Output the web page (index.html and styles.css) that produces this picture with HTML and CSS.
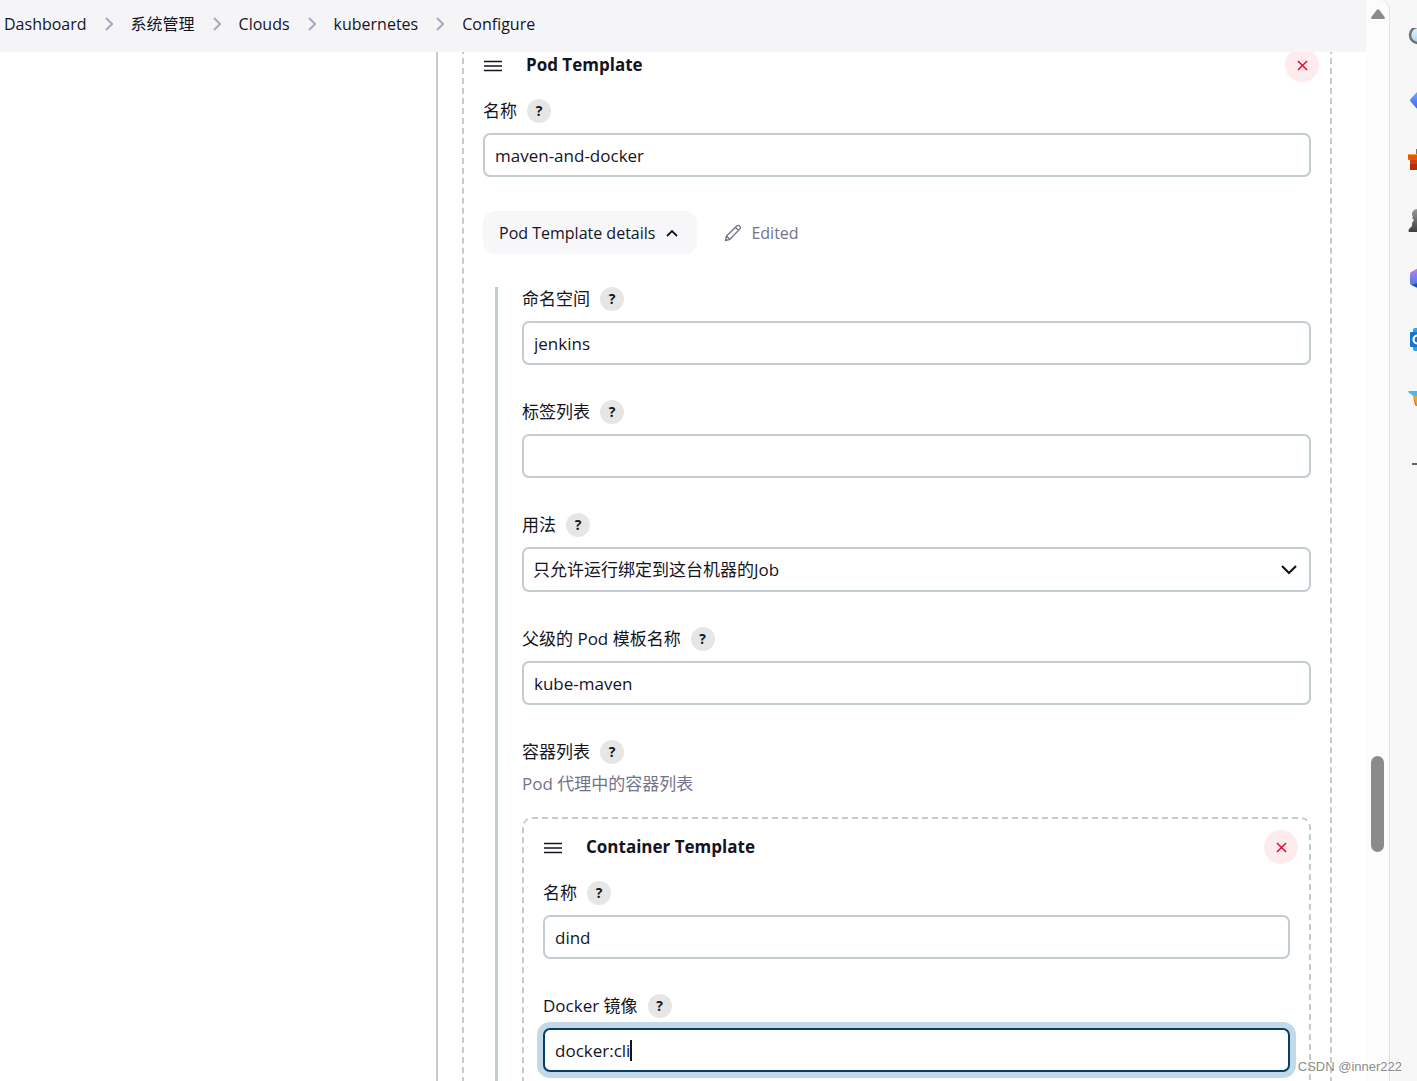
FILE: index.html
```html
<!DOCTYPE html>
<html lang="zh-CN">
<head>
<meta charset="utf-8">
<meta name="viewport" content="width=device-width, initial-scale=1">
<title>Configure - kubernetes</title>
<link rel="stylesheet" href="styles.css">
</head>
<body>
<svg class="sprite" aria-hidden="true">
  <symbol id="chevron" viewBox="0 0 8 14"><path d="M1 1l6 6-6 6" fill="none" stroke="#a9a9bd" stroke-width="2"/></symbol>
  <symbol id="handle" viewBox="0 0 20 14"><path d="M1 3.500h18M1 8h18M1 12.500h18" fill="none" stroke="currentColor" stroke-width="1.700"/></symbol>
  <symbol id="close" viewBox="0 0 12 12"><path d="M1 1l10 10M11 1L1 11" fill="none" stroke="#e6002e" stroke-width="1.500"/></symbol>
</svg>
<div class="window">
  <div class="page">
    <nav class="breadcrumbs" aria-label="Breadcrumb">
      <a href="#">Dashboard</a>
      <svg class="chevron"><use href="#chevron"/></svg>
      <a href="#">系统管理</a>
      <svg class="chevron"><use href="#chevron"/></svg>
      <a href="#">Clouds</a>
      <svg class="chevron"><use href="#chevron"/></svg>
      <a href="#">kubernetes</a>
      <svg class="chevron"><use href="#chevron"/></svg>
      <a href="#">Configure</a>
    </nav>
    <main class="content">
      <form class="form">
        <section class="card card-outer">
          <header class="card-header">
            <svg class="handle"><use href="#handle"/></svg>
            <h2>Pod Template</h2>
            <button type="button" class="delete" aria-label="Delete"><svg><use href="#close"/></svg></button>
          </header>
          <div class="field field-name">
            <div class="field-label"><label for="pod-name">名称</label><button type="button" class="help">?</button></div>
            <input class="control" id="pod-name" type="text" value="maven-and-docker">
          </div>
          <div class="details-bar">
            <button type="button" class="details">Pod Template details
              <svg viewBox="0 0 12 8"><path d="M1 7l5-5 5 5" fill="none" stroke="currentColor" stroke-width="1.800"/></svg>
            </button>
            <span class="edited">
              <svg viewBox="0 0 18 18"><path d="M1.500 16.500l1-4.500L13 1.700q1.400-.9 2.700.4t.3 2.700L6 15.300zM11.500 3.500l3 3M2.700 12.200l3 3" fill="none" stroke="currentColor" stroke-width="1.300" stroke-linejoin="round"/></svg>
              Edited
            </span>
          </div>
          <div class="nested">
            <div class="field">
              <div class="field-label"><label for="namespace">命名空间</label><button type="button" class="help">?</button></div>
              <input class="control" id="namespace" type="text" value="jenkins">
            </div>
            <div class="field">
              <div class="field-label"><label for="labels">标签列表</label><button type="button" class="help">?</button></div>
              <input class="control" id="labels" type="text">
            </div>
            <div class="field">
              <div class="field-label"><label for="usage">用法</label><button type="button" class="help">?</button></div>
              <div class="select-wrap">
                <select class="control" id="usage"><option>只允许运行绑定到这台机器的Job</option></select>
                <svg class="select-arrow" viewBox="0 0 16 10"><path d="M1 1l7 7 7-7" fill="none" stroke="currentColor" stroke-width="2.200"/></svg>
              </div>
            </div>
            <div class="field">
              <div class="field-label"><label for="parent">父级的 Pod 模板名称</label><button type="button" class="help">?</button></div>
              <input class="control" id="parent" type="text" value="kube-maven">
            </div>
            <div class="container-list">
              <div class="field-label"><span>容器列表</span><button type="button" class="help">?</button></div>
              <p class="description">Pod 代理中的容器列表</p>
            </div>
            <section class="card card-inner">
              <header class="card-header">
                <svg class="handle"><use href="#handle"/></svg>
                <h2>Container Template</h2>
                <button type="button" class="delete" aria-label="Delete"><svg><use href="#close"/></svg></button>
              </header>
              <div class="field">
                <div class="field-label"><label for="container-name">名称</label><button type="button" class="help">?</button></div>
                <input class="control" id="container-name" type="text" value="dind">
              </div>
              <div class="field">
                <div class="field-label"><label for="image">Docker 镜像</label><button type="button" class="help">?</button></div>
                <div class="editing">
                  <input class="control active" id="image" type="text" value="docker:cli">
                  <span class="caret"></span>
                </div>
              </div>
            </section>
          </div>
        </section>
      </form>
    </main>
  </div>
  <div class="scrollbar">
    <svg class="scroll-up" viewBox="0 0 14 10"><path d="M6 .5h2L14 8.500q0 1.500-1.500 1.500h-11Q0 10 0 8.500z" fill="#8b8b8b"/></svg>
    <div class="thumb"></div>
  </div>
  <aside class="rail">
    <svg viewBox="0 0 24 24"><defs><linearGradient id="lens" x2="0" y2="1"><stop stop-color="#e8f4fc"/><stop offset="1" stop-color="#a8d4f2"/></linearGradient></defs><path d="M14 13l8 8" stroke="#555" stroke-width="4"/><circle cx="10" cy="7" r="8" fill="url(#lens)" stroke="#707070" stroke-width="2.500"/></svg>
    <svg viewBox="0 0 24 24"><defs><linearGradient id="tag" x2="0" y2="1"><stop stop-color="#6ab7ff"/><stop offset="1" stop-color="#3f52f5"/></linearGradient></defs><path d="M2.500 11L11 2l11 10-10 12L2.500 13.500q-1-1.200 0-2.500z" fill="url(#tag)"/></svg>
    <svg viewBox="0 0 24 24"><path d="M9 6V2h8v4" fill="none" stroke="#777" stroke-width="2"/><path d="M2 11h20v11H3q-1 0-1-1z" fill="#d0420d"/><path d="M2 16h20v6H3q-1 0-1-1z" fill="#b53008"/><path d="M0 6h24v6H1q-1 0-1-1z" fill="#e0590f"/><path d="M0 6h24v1H0z" fill="#ffa02e"/></svg>
    <svg viewBox="0 0 24 24"><defs><linearGradient id="pawn" x2="0" y2="1"><stop stop-color="#999"/><stop offset="1" stop-color="#3f3f3f"/></linearGradient></defs><path d="M5 3a5 5 0 0 1 8 0v3q0 3-2 4v5l4 3v6H1q-1-1 0-3l3-3v-3l2-3-2-2 1-1q-2-3 0-6z" fill="url(#pawn)"/></svg>
    <svg viewBox="0 0 24 24"><defs><linearGradient id="hex" x2="0" y2="1"><stop stop-color="#c084f0"/><stop offset="1" stop-color="#3977e0"/></linearGradient></defs><path d="M3 4l9-5 10 5v12l-10 5-9-4q-1-1-1-2V6q0-1 1-2z" fill="url(#hex)"/><path d="M4 17l6-2 4 5-2 1z" fill="#1c4eb5"/></svg>
    <svg viewBox="0 0 24 24"><path d="M7 0h16v23H7q-2 0-2-2V2q0-2 2-2z" fill="#28a8ea"/><rect x="2" y="4" width="15" height="15" rx="1" fill="#0f78d4"/><circle cx="9.500" cy="11.500" r="4" fill="none" stroke="#fff" stroke-width="2.200"/></svg>
    <svg viewBox="0 0 24 24"><path d="M0 4q0-1 2-1h22v6L8 10z" fill="#43b9ee"/><path d="M5 8l19-1v12l-16-1z" fill="#f4a51c"/><path d="M5 8l4 10-2-1z" fill="#c9780d"/></svg>
    <svg viewBox="0 0 24 24"><path d="M4 16h16M12 8v16" stroke="#333" stroke-width="1.400"/></svg>
  </aside>
  <div class="watermark">CSDN @inner222</div>
</div>
</body>
</html>
```
FILE: styles.css
```css
* { box-sizing: border-box; }

body {
  margin: 0;
  color: #14141f;
  background: #fff;
  font-family: "Open Sans", "Noto Sans CJK SC", sans-serif;
  font-size: 16px;
  line-height: 24px;
}

.sprite { display: none; }
svg { display: block; flex: none; }
button, input, select { font: inherit; color: inherit; }

.window {
  position: relative;
  display: flex;
  height: 100vh;
  overflow: hidden;
  background: #f7f7f7;
}

.page {
  flex: 1;
  min-width: 0;
  display: flex;
  flex-direction: column;
  background: #fff;
  overflow: hidden;
}

.breadcrumbs {
  position: relative;
  z-index: 1;
  flex: none;
  display: flex;
  align-items: center;
  gap: 18px;
  height: 52px;
  padding: 0 4px 4px;
  background: #f5f5f8;
}
.breadcrumbs a { color: inherit; text-decoration: none; white-space: nowrap; }
.chevron { width: 8px; height: 14px; }

/* The scrolled form slides a little under the breadcrumb bar. */
.content {
  flex: 1;
  min-height: 0;
  margin-top: -4px;
  display: grid;
  grid-template-columns: minmax(0, 1fr);
  padding-left: 436px;
}
.form {
  border-left: 2px solid #c3cdd1;
  padding: 0 34px 0 24px;
}

.card {
  border: 2px dashed #c3cdd1;
  border-radius: 10px;
  padding: 11px 19px;
}
.card-outer { border-top: 0; border-radius: 0; padding-top: 0; }
.card-inner { margin-top: 21px; }

.card-header {
  display: flex;
  align-items: center;
  height: 34px;
  margin-bottom: 17px;
}
.card-header h2 {
  flex: 1;
  margin: 0 0 0 23px;
  font-size: 17px;
  font-weight: 700;
  line-height: 24px;
}
.handle { width: 20px; height: 14px; }

.delete {
  display: grid;
  place-items: center;
  width: 34px;
  height: 34px;
  margin-right: -8px;
  padding: 0;
  border: 0;
  border-radius: 50%;
  background: #fdebed;
}
.delete svg { width: 11px; height: 11px; }

.field { margin-bottom: 35px; }
.field-name { margin-bottom: 34px; }
.field-label {
  display: flex;
  align-items: center;
  gap: 10px;
  height: 24px;
  margin-bottom: 10px;
  font-size: 17px;
}
.help {
  width: 24px;
  height: 24px;
  padding: 0;
  border: 0;
  border-radius: 50%;
  background: #e6e6e6;
  font-size: 14px;
  font-weight: 700;
  line-height: 24px;
}

.control {
  display: block;
  width: 100%;
  height: 44px;
  padding: 0 10px;
  border: 2px solid #c3cdd1;
  border-radius: 7px;
  background: #fff;
  font-size: 17px;
  outline: 0;
}
.select-wrap, .editing { position: relative; }
select.control { appearance: none; height: 45px; padding: 0 9px; }
.select-arrow {
  position: absolute;
  right: 14px;
  top: 18px;
  width: 16px;
  height: 10px;
  pointer-events: none;
}
.control.active {
  border-color: #063f63;
  box-shadow: 0 0 0 6px #c2dae8;
}
.caret {
  position: absolute;
  left: 87px;
  top: 12px;
  width: 2px;
  height: 21px;
  background: #14141f;
}

.details-bar { display: flex; align-items: center; gap: 27px; }
.details {
  display: flex;
  align-items: center;
  gap: 11px;
  height: 43px;
  padding: 0 19px 0 16px;
  border: 0;
  border-radius: 12px;
  background: #f7f7fa;
}
.details svg { width: 12px; height: 8px; }
.edited { display: flex; align-items: center; gap: 9px; color: #73738c; }
.edited svg { width: 18px; height: 18px; }

.nested {
  margin: 33px 0 0 12px;
  padding-left: 24px;
  border-left: 3px solid #c3cdd1;
}
.container-list .field-label { margin-bottom: 8px; }
.description { margin: 0; color: #73738c; font-size: 17px; }

.scrollbar {
  flex: none;
  display: flex;
  flex-direction: column;
  align-items: center;
  width: 24px;
  padding-top: 9px;
  border-right: 1px solid #e2e2e2;
  border-top-right-radius: 10px;
  background: #fcfcfc;
}
.scroll-up { width: 14px; height: 10px; }
.thumb {
  width: 13px;
  height: 9%;
  margin-top: 737px;
  border-radius: 7px;
  background: #8b8b8b;
}

.rail {
  flex: none;
  display: flex;
  flex-direction: column;
  gap: 36px;
  width: 27px;
  padding: 28px 0 0 18px;
  overflow: hidden;
}
.rail svg { width: 24px; height: 24px; }

.watermark {
  position: absolute;
  right: 15px;
  bottom: 2px;
  color: #8c8c8c;
  font-family: "Liberation Sans", sans-serif;
  font-size: 13px;
  text-shadow: 1px 1px 0 #fff;
}
```
